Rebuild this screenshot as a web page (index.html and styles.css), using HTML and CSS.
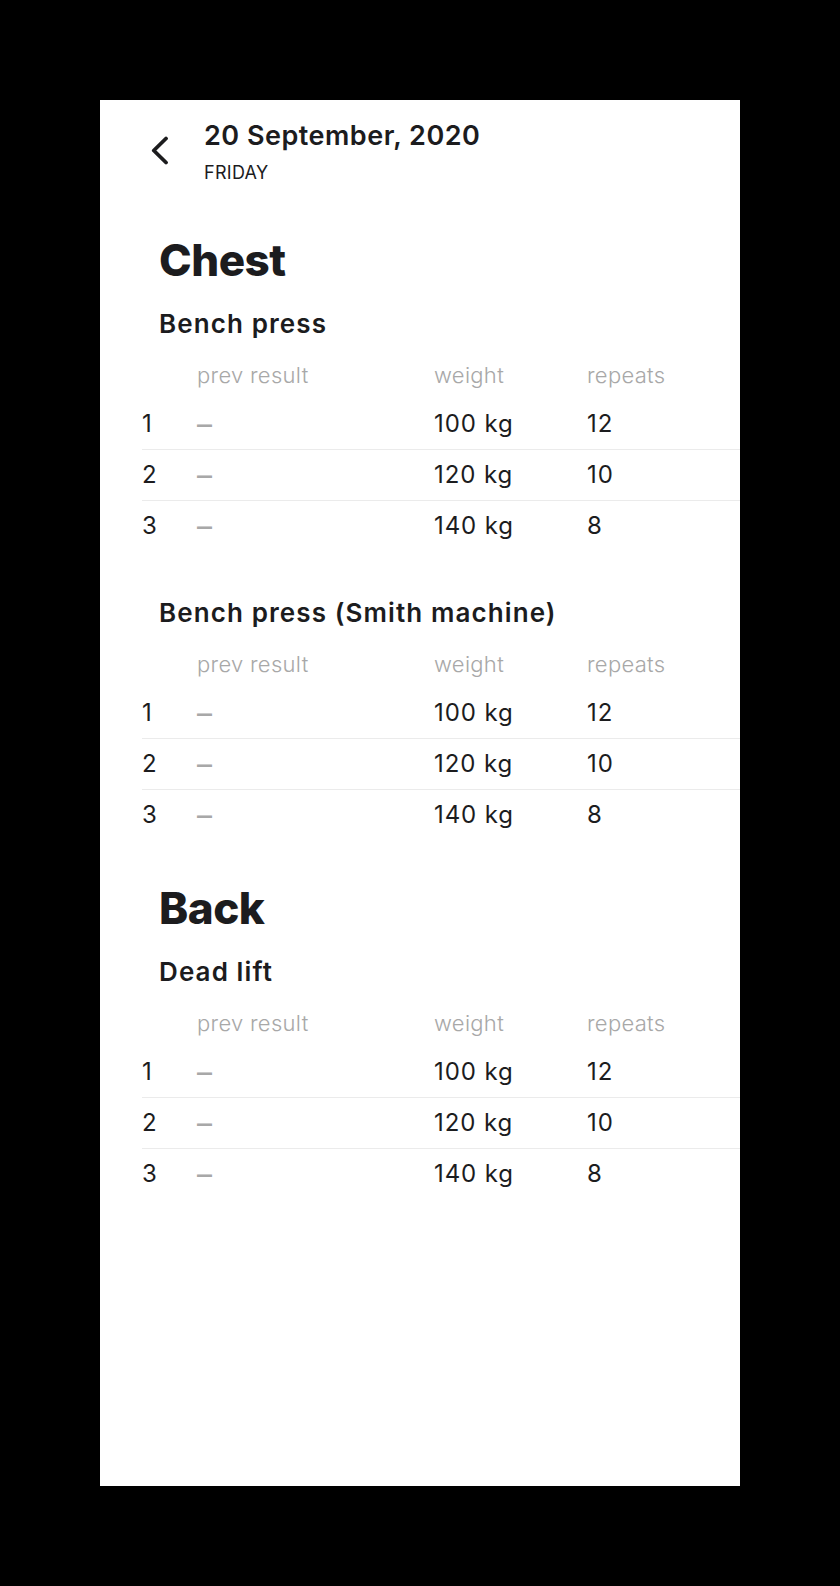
FILE: index.html
```html
<!DOCTYPE html>
<html lang="en">
<head>
<meta charset="utf-8">
<title>Workout — 20 September, 2020</title>
<link rel="stylesheet" href="styles.css">
</head>
<body>
<div class="card">
  <header class="top">
    <svg class="back" width="18" height="30" viewBox="0 0 18 30" aria-hidden="true">
      <polyline points="15,2.5 2.8,14.5 15,26.5" fill="none" stroke="#1c1c1e" stroke-width="3.8" stroke-linecap="round" stroke-linejoin="round"/>
    </svg>
    <div class="date">
      <div class="date-title">20 September, 2020</div>
      <div class="date-day">FRIDAY</div>
    </div>
  </header>

  <section class="group">
    <h1 class="group-title">Chest</h1>

    <div class="exercise">
      <h2 class="ex-title">Bench press</h2>
      <div class="sets">
        <div class="row head"><span></span><span>prev result</span><span>weight</span><span>repeats</span></div>
        <div class="row"><span>1</span><span class="dash">–</span><span>100 kg</span><span>12</span></div>
        <div class="row"><span>2</span><span class="dash">–</span><span>120 kg</span><span>10</span></div>
        <div class="row"><span>3</span><span class="dash">–</span><span>140 kg</span><span>8</span></div>
      </div>
    </div>

    <div class="exercise">
      <h2 class="ex-title">Bench press (Smith machine)</h2>
      <div class="sets">
        <div class="row head"><span></span><span>prev result</span><span>weight</span><span>repeats</span></div>
        <div class="row"><span>1</span><span class="dash">–</span><span>100 kg</span><span>12</span></div>
        <div class="row"><span>2</span><span class="dash">–</span><span>120 kg</span><span>10</span></div>
        <div class="row"><span>3</span><span class="dash">–</span><span>140 kg</span><span>8</span></div>
      </div>
    </div>
  </section>

  <section class="group">
    <h1 class="group-title">Back</h1>

    <div class="exercise">
      <h2 class="ex-title">Dead lift</h2>
      <div class="sets">
        <div class="row head"><span></span><span>prev result</span><span>weight</span><span>repeats</span></div>
        <div class="row"><span>1</span><span class="dash">–</span><span>100 kg</span><span>12</span></div>
        <div class="row"><span>2</span><span class="dash">–</span><span>120 kg</span><span>10</span></div>
        <div class="row"><span>3</span><span class="dash">–</span><span>140 kg</span><span>8</span></div>
      </div>
    </div>
  </section>
</div>
</body>
</html>
```

FILE: styles.css
```css
html, body {
  margin: 0;
  padding: 0;
  background: #000;
}

body {
  padding: 100px 100px 100px 100px;
  font-family: Inter, "Noto Sans", sans-serif;
  color: #1c1c1e;
}

.card {
  width: 640px;
  height: 1386px;
  background: #fff;
  box-sizing: border-box;
  padding-top: 19px;
  overflow: hidden;
}

.top {
  display: flex;
  align-items: flex-start;
  margin-left: 51px;
}

.back {
  display: block;
  margin-top: 17px;
  flex: none;
}

.date {
  margin-left: 35px;
}

.date-title {
  font-size: 27px;
  line-height: 34px;
  font-weight: 600;
  letter-spacing: 0.5px;
}

.date-day {
  margin-top: 8px;
  font-size: 18px;
  line-height: 24px;
  font-weight: 400;
  letter-spacing: 0.3px;
}

.group {
  margin-top: 49px;
}

.group + .group {
  margin-top: 42px;
}

.group-title {
  margin: 0 0 0 59px;
  font-size: 44px;
  line-height: 52px;
  font-weight: 800;
  letter-spacing: -0.5px;
}

.exercise {
  margin-top: 20px;
}

.exercise + .exercise {
  margin-top: 44px;
}

.ex-title {
  margin: 0 0 9px 59px;
  font-size: 26px;
  line-height: 36px;
  font-weight: 600;
  letter-spacing: 1.1px;
}

.sets {
  margin-left: 42px;
}

.row {
  display: grid;
  grid-template-columns: 55px 237px 153px 1fr;
  height: 50px;
  align-items: center;
  font-size: 24px;
  line-height: 30px;
  font-weight: 400;
  letter-spacing: 0.9px;
}

.row + .row:not(:last-child) {
  border-bottom: 1px solid #ebebeb;
}

.row.head {
  height: 48px;
  font-size: 22px;
  font-weight: 300;
  color: #a8a8a8;
  letter-spacing: 0.3px;
}

.dash {
  color: #a8a8a8;
  font-size: 30px;
  line-height: 30px;
  letter-spacing: 0;
}
```
